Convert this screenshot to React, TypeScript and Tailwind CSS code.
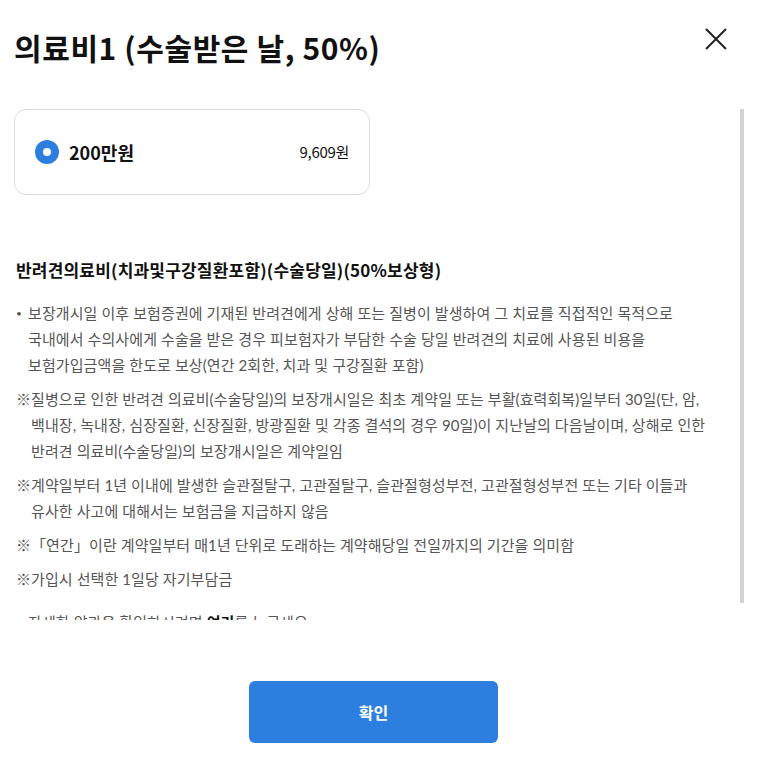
const notes = [
  "질병으로 인한 반려견 의료비(수술당일)의 보장개시일은 최초 계약일 또는 부활(효력회복)일부터 30일(단, 암, 백내장, 녹내장, 심장질환, 신장질환, 방광질환 및 각종 결석의 경우 90일)이 지난날의 다음날이며, 상해로 인한 반려견 의료비(수술당일)의 보장개시일은 계약일임",
  "계약일부터 1년 이내에 발생한 슬관절탈구, 고관절탈구, 슬관절형성부전, 고관절형성부전 또는 기타 이들과 유사한 사고에 대해서는 보험금을 지급하지 않음",
  "「연간」이란 계약일부터 매1년 단위로 도래하는 계약해당일 전일까지의 기간을 의미함",
  "가입시 선택한 1일당 자기부담금"
];

export default function App() {
  return (
    <div className="relative h-[769px] w-[765px] overflow-hidden bg-white font-['Noto_Sans_CJK_KR','Noto_Sans',sans-serif] text-[#111]">
      <div className="flex items-start justify-between pl-[14px] pr-[38px] pt-[25px]">
        <h1 className="text-[30px] font-bold leading-[44px] tracking-[0.6px]">의료비1 (수술받은 날, 50%)</h1>
        <button type="button" className="mt-[3px] text-[#222]">
          <svg width="22" height="22" viewBox="0 0 22 22" fill="none" stroke="currentColor" strokeWidth="2">
            <path d="M1 1L21 21M21 1L1 21" />
          </svg>
        </button>
      </div>

      <div className="relative mt-[40px] h-[511px] overflow-hidden">
        <div className="pl-[14px] pr-[43px]">
          <div className="flex h-[86px] w-[356px] items-center justify-between rounded-[12px] border border-[#dcdcdc] pl-[20px] pr-[20px]">
            <div className="flex items-center gap-[10px]">
              <span className="flex h-[24px] w-[24px] items-center justify-center rounded-full bg-[#2d7fdf]">
                <span className="h-[8px] w-[8px] rounded-full bg-white" />
              </span>
              <span className="text-[18px] font-bold">200만원</span>
            </div>
            <span className="text-[15px] tracking-[-0.3px]">9,609원</span>
          </div>

          <h2 className="mt-[63px] pl-[2px] text-[17px] font-bold leading-[24px] tracking-[0.2px]">
            반려견의료비(치과및구강질환포함)(수술당일)(50%보상형)
          </h2>

          <div className="mt-[18px] break-keep pl-[2px] font-['Lato','Noto_Sans_CJK_KR',sans-serif] text-[15px] leading-[26px] tracking-[0.1px] text-[#555]">
            <div className="flex">
              <span className="w-[12px] shrink-0 text-[10px]">•</span>
              <p>
                보장개시일 이후 보험증권에 기재된 반려견에게 상해 또는 질병이 발생하여 그 치료를 직접적인 목적으로 국내에서 수의사에게 수술을 받은 경우 피보험자가 부담한 수술 당일 반려견의 치료에 사용된 비용을 보험가입금액을 한도로 보상(연간 2회한, 치과 및 구강질환 포함)
              </p>
            </div>
            {notes.map((note) => (
              <div key={note} className="mt-[8px] flex">
                <span className="w-[15px] shrink-0 tracking-normal">※</span>
                <p>{note}</p>
              </div>
            ))}
            <p className="mt-[17px] pl-[12px]">
              자세한 약관을 확인하시려면 <b className="text-[#111]">여기</b>를 누르세요
            </p>
          </div>
        </div>
        <div className="absolute right-[21px] top-0 h-[494px] w-[4px] bg-[#d4d4d4]" />
      </div>

      <div className="mt-[61px] flex justify-center pr-[18px]">
        <button
          type="button"
          className="h-[62px] w-[249px] rounded-[6px] bg-[#2d7fdf] text-[16px] font-bold text-white"
        >
          확인
        </button>
      </div>
    </div>
  );
}
